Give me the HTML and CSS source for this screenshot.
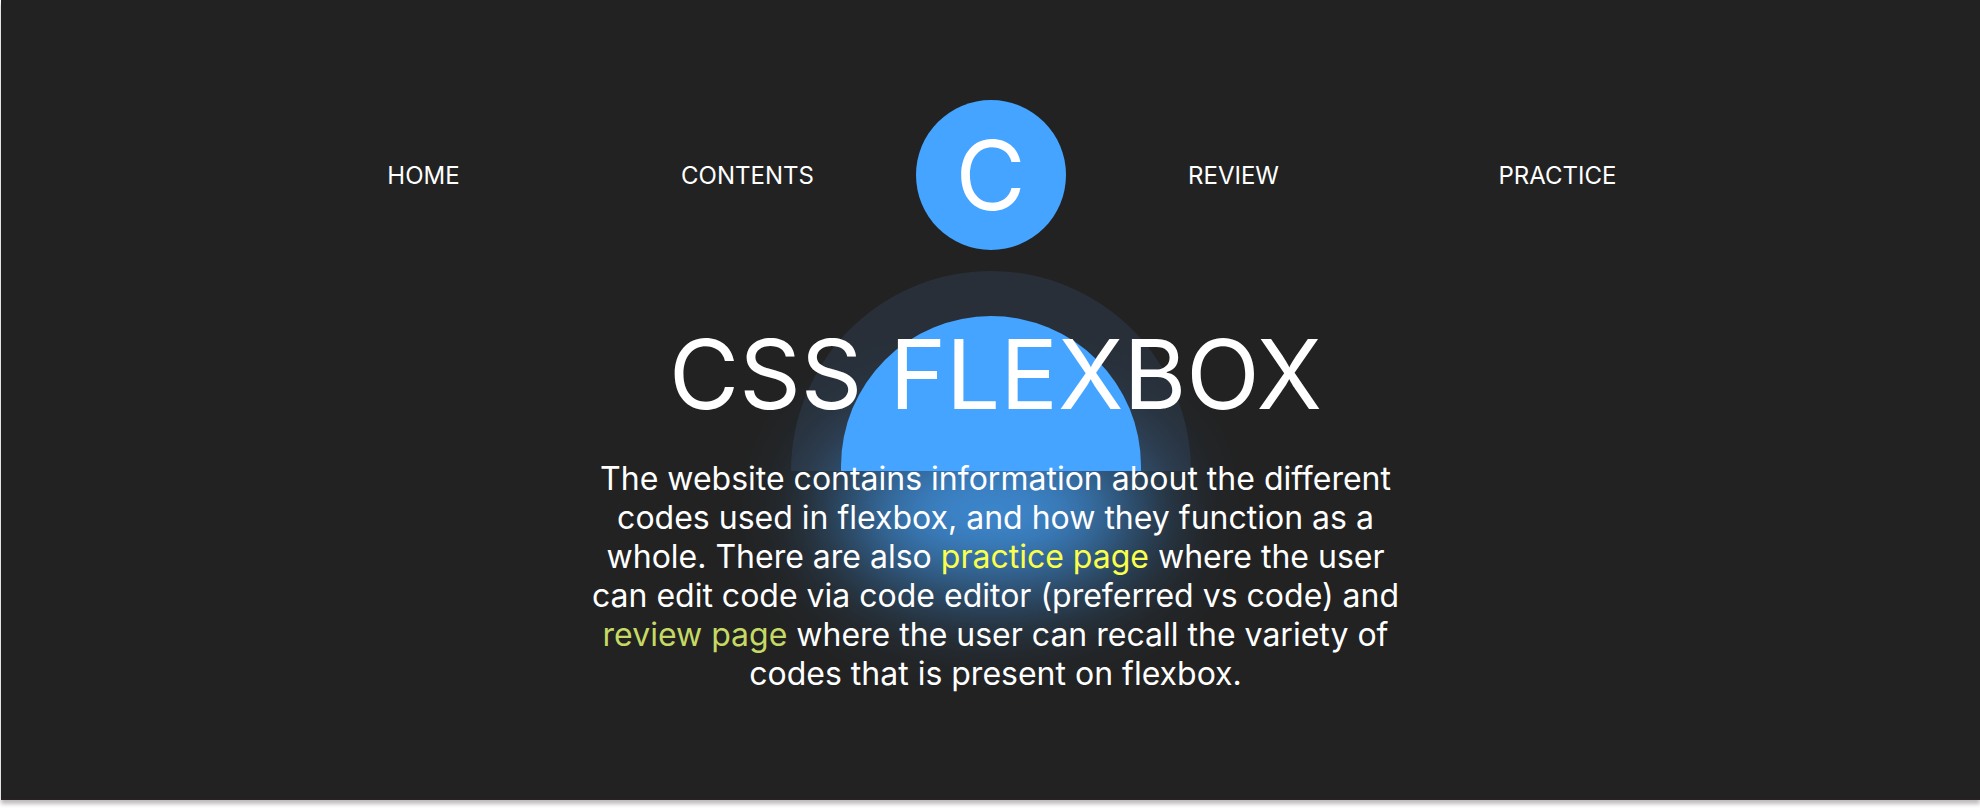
FILE: index.html
```html
<!DOCTYPE html>
<html lang="en">
<head>
<meta charset="utf-8">
<title>CSS Flexbox</title>
<link rel="stylesheet" href="styles.css">
</head>
<body>
<div class="page">
  <nav class="nav" aria-label="Main">
    <a href="#home">HOME</a>
    <a href="#contents">CONTENTS</a>
    <a class="logo" href="#home">C</a>
    <a href="#review">REVIEW</a>
    <a href="#practice">PRACTICE</a>
  </nav>
  <main class="hero">
    <div class="glow"></div>
    <div class="halo"></div>
    <div class="dome"></div>
    <div class="copy">
      <h1>CSS FLEXBOX</h1>
      <p>The website contains information about the different codes used in flexbox, and how they function as a whole. There are also <a class="practice" href="#practice">practice page</a> where the user can edit code via code editor (preferred vs code) and <a class="review" href="#review">review page</a> where the user can recall the variety of codes that is present on flexbox.</p>
    </div>
  </main>
</div>
</body>
</html>
```
FILE: styles.css
```css
* {
  box-sizing: border-box;
}

body {
  margin: 0;
  padding: 0 0 8px 1px;
  background: #fff;
  color: #fff;
  font-family: Inter, "Liberation Sans", sans-serif;
  min-height: 100vh;
  display: flex;
  flex-direction: column;
  overflow: hidden;
}

a {
  color: inherit;
  text-decoration: none;
}

.page {
  flex: 1;
  padding-top: 100px;
  background: #222;
  border-bottom: 1px solid #2a2027;
  box-shadow: 0 4px 4px rgba(40, 30, 38, 0.3);
}

.nav {
  display: grid;
  grid-template-columns: 2fr 2fr 1fr 2fr 2fr;
  align-items: center;
  justify-items: center;
  max-width: 1458px;
  margin: 0 auto;
  font-size: 24px;
}

.logo {
  display: grid;
  place-items: center;
  width: 150px;
  height: 150px;
  border-radius: 50%;
  background: #44a4ff;
  font-size: 96px;
}

.hero {
  position: relative;
  margin-top: 21px;
  padding-top: 45px;
}

.glow,
.halo,
.dome {
  position: absolute;
  left: 50%;
  transform: translateX(-50%);
}

.glow {
  top: 164px;
  width: 310px;
  height: 150px;
  border-radius: 50%;
  background: #44a4ff;
  filter: blur(50px);
  opacity: 0.88;
}

.halo {
  top: 0;
  width: 400px;
  height: 200px;
  border-radius: 200px 200px 0 0;
  background: rgba(100, 170, 255, 0.1);
}

.dome {
  top: 45px;
  width: 300px;
  height: 155px;
  border-radius: 150px 150px 0 0;
  background: #44a4ff;
}

.copy {
  position: relative;
  display: flex;
  flex-direction: column;
  align-items: center;
  gap: 27px;
  padding-left: 10px;
  text-align: center;
}

h1 {
  margin: 0;
  font-size: 96px;
  font-weight: 400;
  line-height: 116px;
}

p {
  max-width: 820px;
  margin: 0;
  font-size: 32px;
  line-height: 39px;
}

.practice {
  color: #faff4b;
}

.review {
  color: #c5d965;
}
```
